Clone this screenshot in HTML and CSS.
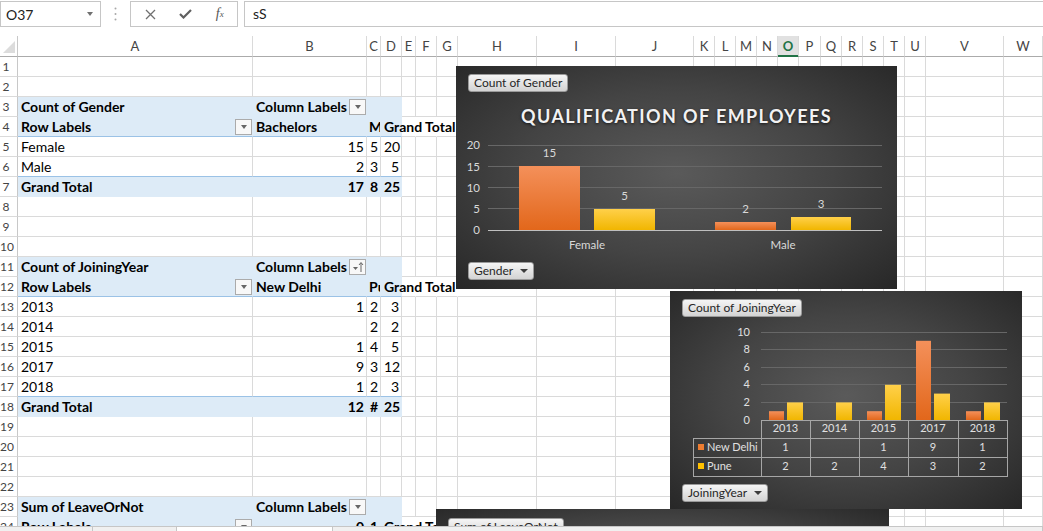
FILE: index.html
```html
<!DOCTYPE html>
<html>
<head>
<meta charset="utf-8">
<title>Pivot charts</title>
<link rel="stylesheet" href="styles.css">
</head>
<body>
<div class="fbar">
  <div class="namebox"><span>O37</span><span class="dd"></span></div>
  <div class="grip"><svg width="3" height="14" viewBox="0 0 3 14"><circle cx="1.5" cy="1.5" r="1"/><circle cx="1.5" cy="7" r="1"/><circle cx="1.5" cy="12.5" r="1"/></svg></div>
  <div class="fx-tools">
    <span class="tool"><svg width="11" height="11" viewBox="0 0 11 11"><path class="x" d="M1 1L10 10M10 1L1 10"/></svg></span>
    <span class="tool"><svg width="13" height="10" viewBox="0 0 13 10"><path class="ok" d="M1 5L4.5 8.5L12 1"/></svg></span>
    <span class="tool fx"><i>f</i><sub>x</sub></span>
  </div>
  <div class="finput">sS</div>
</div>

<div class="sheet-wrap">
  <div class="sheet">
    <div class="row hdr"><i class="corner"><svg width="17" height="20" viewBox="0 0 17 20"><polygon points="15,5 15,17 3,17"/></svg></i><i>A</i><i>B</i><i>C</i><i>D</i><i>E</i><i>F</i><i>G</i><i>H</i><i>I</i><i>J</i><i>K</i><i>L</i><i>M</i><i>N</i><i class="sel">O</i><i>P</i><i>Q</i><i>R</i><i>S</i><i>T</i><i>U</i><i>V</i><i>W</i></div>
    <div class="row"><i class="rh">1</i><i></i><i></i><i></i><i></i><i></i><i></i><i></i><i></i><i></i><i></i><i></i><i></i><i></i><i></i><i></i><i></i><i></i><i></i><i></i><i></i><i></i><i></i><i></i></div>
    <div class="row"><i class="rh">2</i><i></i><i></i><i></i><i></i><i></i><i></i><i></i><i></i><i></i><i></i><i></i><i></i><i></i><i></i><i></i><i></i><i></i><i></i><i></i><i></i><i></i><i></i><i></i></div>
    <div class="row"><i class="rh">3</i><i class="pv b">Count of Gender</i><i class="pv b flt">Column Labels<span class="btn"></span></i><i class="pv"></i><i class="pv"></i><i></i><i></i><i></i><i></i><i></i><i></i><i></i><i></i><i></i><i></i><i></i><i></i><i></i><i></i><i></i><i></i><i></i><i></i><i></i></div>
    <div class="row"><i class="rh">4</i><i class="pv ln b flt">Row Labels<span class="btn"></span></i><i class="pv ln b">Bachelors</i><i class="pv ln b tight">Masters</i><i class="pv ln b ov">Grand Total</i><i class="nb"></i><i class="nb"></i><i class="nb"></i><i></i><i></i><i></i><i></i><i></i><i></i><i></i><i></i><i></i><i></i><i></i><i></i><i></i><i></i><i></i><i></i></div>
    <div class="row"><i class="rh">5</i><i>Female</i><i class="n">15</i><i class="n">5</i><i class="n">20</i><i></i><i></i><i></i><i></i><i></i><i></i><i></i><i></i><i></i><i></i><i></i><i></i><i></i><i></i><i></i><i></i><i></i><i></i><i></i></div>
    <div class="row"><i class="rh">6</i><i class="ln">Male</i><i class="n ln">2</i><i class="n ln">3</i><i class="n ln">5</i><i></i><i></i><i></i><i></i><i></i><i></i><i></i><i></i><i></i><i></i><i></i><i></i><i></i><i></i><i></i><i></i><i></i><i></i><i></i></div>
    <div class="row"><i class="rh">7</i><i class="pv b">Grand Total</i><i class="pv b n">17</i><i class="pv b n">8</i><i class="pv b n">25</i><i></i><i></i><i></i><i></i><i></i><i></i><i></i><i></i><i></i><i></i><i></i><i></i><i></i><i></i><i></i><i></i><i></i><i></i><i></i></div>
    <div class="row"><i class="rh">8</i><i></i><i></i><i></i><i></i><i></i><i></i><i></i><i></i><i></i><i></i><i></i><i></i><i></i><i></i><i></i><i></i><i></i><i></i><i></i><i></i><i></i><i></i><i></i></div>
    <div class="row"><i class="rh">9</i><i></i><i></i><i></i><i></i><i></i><i></i><i></i><i></i><i></i><i></i><i></i><i></i><i></i><i></i><i></i><i></i><i></i><i></i><i></i><i></i><i></i><i></i><i></i></div>
    <div class="row"><i class="rh">10</i><i></i><i></i><i></i><i></i><i></i><i></i><i></i><i></i><i></i><i></i><i></i><i></i><i></i><i></i><i></i><i></i><i></i><i></i><i></i><i></i><i></i><i></i><i></i></div>
    <div class="row"><i class="rh">11</i><i class="pv b">Count of JoiningYear</i><i class="pv b flt">Column Labels<span class="btn sort"><svg width="13" height="12" viewBox="0 0 13 12"><polygon points="2,6 7,6 4.5,9"/><path d="M10 11V2M8 4L10 1.5L12 4"/></svg></span></i><i class="pv"></i><i class="pv"></i><i></i><i></i><i></i><i></i><i></i><i></i><i></i><i></i><i></i><i></i><i></i><i></i><i></i><i></i><i></i><i></i><i></i><i></i><i></i></div>
    <div class="row"><i class="rh">12</i><i class="pv ln b flt">Row Labels<span class="btn"></span></i><i class="pv ln b">New Delhi</i><i class="pv ln b tight">Pune</i><i class="pv ln b ov">Grand Total</i><i class="nb"></i><i class="nb"></i><i class="nb"></i><i></i><i></i><i></i><i></i><i></i><i></i><i></i><i></i><i></i><i></i><i></i><i></i><i></i><i></i><i></i><i></i></div>
    <div class="row"><i class="rh">13</i><i>2013</i><i class="n">1</i><i class="n">2</i><i class="n">3</i><i></i><i></i><i></i><i></i><i></i><i></i><i></i><i></i><i></i><i></i><i></i><i></i><i></i><i></i><i></i><i></i><i></i><i></i><i></i></div>
    <div class="row"><i class="rh">14</i><i>2014</i><i class="n"></i><i class="n">2</i><i class="n">2</i><i></i><i></i><i></i><i></i><i></i><i></i><i></i><i></i><i></i><i></i><i></i><i></i><i></i><i></i><i></i><i></i><i></i><i></i><i></i></div>
    <div class="row"><i class="rh">15</i><i>2015</i><i class="n">1</i><i class="n">4</i><i class="n">5</i><i></i><i></i><i></i><i></i><i></i><i></i><i></i><i></i><i></i><i></i><i></i><i></i><i></i><i></i><i></i><i></i><i></i><i></i><i></i></div>
    <div class="row"><i class="rh">16</i><i>2017</i><i class="n">9</i><i class="n">3</i><i class="n">12</i><i></i><i></i><i></i><i></i><i></i><i></i><i></i><i></i><i></i><i></i><i></i><i></i><i></i><i></i><i></i><i></i><i></i><i></i><i></i></div>
    <div class="row"><i class="rh">17</i><i class="ln">2018</i><i class="n ln">1</i><i class="n ln">2</i><i class="n ln">3</i><i></i><i></i><i></i><i></i><i></i><i></i><i></i><i></i><i></i><i></i><i></i><i></i><i></i><i></i><i></i><i></i><i></i><i></i><i></i></div>
    <div class="row"><i class="rh">18</i><i class="pv b">Grand Total</i><i class="pv b n">12</i><i class="pv b n">#</i><i class="pv b n">25</i><i></i><i></i><i></i><i></i><i></i><i></i><i></i><i></i><i></i><i></i><i></i><i></i><i></i><i></i><i></i><i></i><i></i><i></i><i></i></div>
    <div class="row"><i class="rh">19</i><i></i><i></i><i></i><i></i><i></i><i></i><i></i><i></i><i></i><i></i><i></i><i></i><i></i><i></i><i></i><i></i><i></i><i></i><i></i><i></i><i></i><i></i><i></i></div>
    <div class="row"><i class="rh">20</i><i></i><i></i><i></i><i></i><i></i><i></i><i></i><i></i><i></i><i></i><i></i><i></i><i></i><i></i><i></i><i></i><i></i><i></i><i></i><i></i><i></i><i></i><i></i></div>
    <div class="row"><i class="rh">21</i><i></i><i></i><i></i><i></i><i></i><i></i><i></i><i></i><i></i><i></i><i></i><i></i><i></i><i></i><i></i><i></i><i></i><i></i><i></i><i></i><i></i><i></i><i></i></div>
    <div class="row"><i class="rh">22</i><i></i><i></i><i></i><i></i><i></i><i></i><i></i><i></i><i></i><i></i><i></i><i></i><i></i><i></i><i></i><i></i><i></i><i></i><i></i><i></i><i></i><i></i><i></i></div>
    <div class="row"><i class="rh">23</i><i class="pv b">Sum of LeaveOrNot</i><i class="pv b flt">Column Labels<span class="btn"></span></i><i class="pv"></i><i class="pv"></i><i></i><i></i><i></i><i></i><i></i><i></i><i></i><i></i><i></i><i></i><i></i><i></i><i></i><i></i><i></i><i></i><i></i><i></i><i></i></div>
    <div class="row"><i class="rh">24</i><i class="pv ln b flt">Row Labels<span class="btn"></span></i><i class="pv ln b n">0</i><i class="pv ln b n">1</i><i class="pv ln b ov">Grand Total</i><i class="nb"></i><i class="nb"></i><i class="nb"></i><i></i><i></i><i></i><i></i><i></i><i></i><i></i><i></i><i></i><i></i><i></i><i></i><i></i><i></i><i></i><i></i></div>
  </div>

  <div class="chart c1">
    <svg class="plot" width="441" height="223" viewBox="0 0 441 223">
      <defs>
        <linearGradient id="og1" x1="0" y1="0" x2="0" y2="1"><stop offset="0" stop-color="#f4905a"/><stop offset="1" stop-color="#e2671b"/></linearGradient>
        <linearGradient id="yg1" x1="0" y1="0" x2="0" y2="1"><stop offset="0" stop-color="#ffd04a"/><stop offset="1" stop-color="#f1b600"/></linearGradient>
      </defs>
      <path class="grid" d="M32 79.5H426M32 100.5H426M32 121.5H426M32 142.5H426"/>
      <rect x="63" y="100" width="61" height="64" fill="url(#og1)"/>
      <rect x="138" y="143" width="61" height="21" fill="url(#yg1)"/>
      <rect x="259" y="156" width="61" height="8" fill="url(#og1)"/>
      <rect x="335" y="151" width="60" height="13" fill="url(#yg1)"/>
      <path class="axis" d="M32 164.5H426"/>
      <g class="ylab">
        <text x="24" y="83">20</text>
        <text x="24" y="105">15</text>
        <text x="24" y="126">10</text>
        <text x="24" y="147">5</text>
        <text x="24" y="168">0</text>
      </g>
      <g class="mid">
        <text x="93.5" y="91">15</text>
        <text x="168.5" y="134">5</text>
        <text x="289.5" y="147">2</text>
        <text x="365" y="142">3</text>
        <text x="131" y="183">Female</text>
        <text x="327" y="183">Male</text>
      </g>
    </svg>
    <div class="overlay o1">
      <span class="fbtn">Count of Gender</span>
      <div class="title">QUALIFICATION OF EMPLOYEES</div>
      <span class="fbtn bottom">Gender<span class="tri"></span></span>
    </div>
  </div>

  <div class="chart c2">
    <svg class="plot p2" width="352" height="218" viewBox="0 0 352 218">
      <defs>
        <linearGradient id="og2" x1="0" y1="0" x2="0" y2="1"><stop offset="0" stop-color="#f4905a"/><stop offset="1" stop-color="#e2671b"/></linearGradient>
        <linearGradient id="yg2" x1="0" y1="0" x2="0" y2="1"><stop offset="0" stop-color="#ffd04a"/><stop offset="1" stop-color="#f1b600"/></linearGradient>
      </defs>
      <path class="grid" d="M91 41.5H337M91 58.5H337M91 76.5H337M91 93.5H337M91 111.5H337"/>
      <rect x="99" y="120.2" width="15" height="8.8" fill="url(#og2)"/>
      <rect x="117" y="111.4" width="16" height="17.6" fill="url(#yg2)"/>
      <rect x="166" y="111.4" width="16" height="17.6" fill="url(#yg2)"/>
      <rect x="197" y="120.2" width="15" height="8.8" fill="url(#og2)"/>
      <rect x="215" y="93.8" width="16" height="35.2" fill="url(#yg2)"/>
      <rect x="246" y="49.8" width="15" height="79.2" fill="url(#og2)"/>
      <rect x="264" y="102.6" width="16" height="26.4" fill="url(#yg2)"/>
      <rect x="296" y="120.2" width="15" height="8.8" fill="url(#og2)"/>
      <rect x="314" y="111.4" width="16" height="17.6" fill="url(#yg2)"/>
      <path class="tbl" d="M91 129.5H337M23 147.5H337M23 166.5H337M23 185.5H337M23.5 147V186M91.5 129V186M140.5 129V186M189.5 129V186M238.5 129V186M288.5 129V186M337.5 129V186"/>
      <g class="ylab">
        <text x="80" y="45">10</text>
        <text x="80" y="62">8</text>
        <text x="80" y="80">6</text>
        <text x="80" y="97">4</text>
        <text x="80" y="115">2</text>
        <text x="80" y="132.5">0</text>
      </g>
      <g class="mid">
        <text x="115.5" y="141">2013</text>
        <text x="164.5" y="141">2014</text>
        <text x="213.5" y="141">2015</text>
        <text x="263" y="141">2017</text>
        <text x="312.5" y="141">2018</text>
        <text x="115.5" y="160">1</text>
        <text x="213.5" y="160">1</text>
        <text x="263" y="160">9</text>
        <text x="312.5" y="160">1</text>
        <text x="115.5" y="179">2</text>
        <text x="164.5" y="179">2</text>
        <text x="213.5" y="179">4</text>
        <text x="263" y="179">3</text>
        <text x="312.5" y="179">2</text>
      </g>
      <rect x="28" y="153" width="6" height="6" fill="#ed7d31"/>
      <rect x="28" y="172" width="6" height="6" fill="#ffc000"/>
      <text x="37" y="160">New Delhi</text>
      <text x="37" y="179">Pune</text>
    </svg>
    <div class="overlay o2">
      <span class="fbtn">Count of JoiningYear</span>
      <span class="fbtn bottom">JoiningYear<span class="tri"></span></span>
    </div>
  </div>

  <div class="chart c3">
    <div class="overlay o3">
      <span class="fbtn">Sum of LeaveOrNot</span>
    </div>
  </div>
</div>

<div class="tabs"><span class="t1"></span><span class="t2"></span><span class="t3"></span><span class="t4"></span></div>
</body>
</html>
```

FILE: styles.css
```css
* { box-sizing: border-box; }
html, body { margin: 0; padding: 0; }
body {
  width: 1043px;
  height: 531px;
  overflow: hidden;
  background: #fff;
  font-family: Lato, "Liberation Sans", sans-serif;
  color: #000;
  display: flex;
  flex-direction: column;
}

/* formula bar */
.fbar {
  height: 36px;
  flex: none;
  display: flex;
  align-items: flex-start;
  padding-top: 1px;
}
.namebox {
  width: 101px;
  height: 26px;
  border: 1px solid #c6c6c6;
  display: flex;
  align-items: center;
  justify-content: space-between;
  padding: 0 7px 0 5px;
  font-size: 14px;
  color: #222;
}
.namebox .dd {
  width: 0;
  height: 0;
  border-left: 3.5px solid transparent;
  border-right: 3.5px solid transparent;
  border-top: 4px solid #707070;
}
.grip {
  width: 29px;
  height: 26px;
  display: flex;
  align-items: center;
  justify-content: center;
}
.grip svg { fill: #a8a8a8; display: block; }
.fx-tools {
  width: 108px;
  height: 26px;
  border: 1px solid #c6c6c6;
  display: flex;
  align-items: center;
  padding-left: 2px;
}
.tool {
  width: 35px;
  display: flex;
  justify-content: center;
  align-items: center;
}
.tool svg { display: block; }
.tool .x { fill: none; stroke: #707070; stroke-width: 1.3; }
.tool .ok { fill: none; stroke: #606060; stroke-width: 2.2; }
.fx {
  font-family: "Liberation Serif", serif;
  font-style: italic;
  font-size: 14px;
  color: #555;
}
.fx sub { font-size: 9px; }
.finput {
  flex: 1;
  height: 26px;
  margin-left: 6px;
  margin-right: -2px;
  border: 1px solid #c6c6c6;
  padding-left: 8px;
  font-size: 14px;
  line-height: 24px;
  color: #222;
}

/* sheet */
.sheet-wrap {
  position: relative;
  height: 490px;
  flex: none;
  overflow: hidden;
}
.sheet {
  --cols: 18px 235px 114px 14px 21px 14px 21px 21px 79px 79px 78px 21px 21px 21px 21px 21px 22px 21px 21px 21px 21px 21px 78px 39px;
  width: 1043px;
  font-size: 14px;
}
.row {
  display: grid;
  grid-template-columns: var(--cols);
  height: 20px;
}
.row > * {
  display: block;
  min-width: 0;
  font-style: normal;
  border-right: 1px solid #dadada;
  border-bottom: 1px solid #dadada;
  overflow: hidden;
  white-space: nowrap;
  padding: 0 2px 0 3px;
  line-height: 19px;
}
.hdr { height: 21px; }
.hdr > * {
  border-bottom-color: #ababab;
  text-align: center;
  font-size: 13px;
  line-height: 20px;
  color: #444;
  padding: 0;
}
.hdr > .corner { border-right-color: #c8c8c8; }
.corner svg { display: block; fill: #dcdcdc; }
.hdr > .sel {
  background: #e1e1e1;
  color: #217346;
  font-weight: 700;
  border-bottom-color: #217346;
  box-shadow: inset 0 -1px 0 #217346;
}
.row > .rh {
  font-size: 12px;
  color: #444;
  text-align: center;
  padding: 0 5px 0 0;
  border-right-color: #c8c8c8;
}
.row > .pv {
  background: #ddebf7;
  border-right-color: #ddebf7;
  border-bottom-color: #ddebf7;
}
.row > .ln { border-bottom-color: #9bc2e6; }
.row > .b { font-weight: 700; }
.row > .n { text-align: right; }
.row > .ov { overflow: visible; }
.row > .tight { padding-left: 2px; }
.row > .nb { border-right-color: transparent; }
.row > .flt {
  display: flex;
  align-items: center;
  justify-content: space-between;
  padding-right: 0;
}
.btn {
  flex: none;
  width: 17px;
  height: 16px;
  border: 1px solid #ababab;
  background: #f8f8f8;
  display: flex;
  align-items: center;
  justify-content: center;
}
.btn::after {
  content: "";
  border-left: 3px solid transparent;
  border-right: 3px solid transparent;
  border-top: 4px solid #666;
}
.btn.sort::after { content: none; }
.btn.sort svg { display: block; fill: #666; }
.btn.sort path { fill: none; stroke: #666; stroke-width: 1; }

/* charts */
.chart {
  position: absolute;
  display: grid;
  background: radial-gradient(ellipse at 50% 48%, #5a5a5a 0%, #444 50%, #272727 100%);
  overflow: hidden;
}
.chart > * { grid-area: 1 / 1; }
.c1 { left: 456px; top: 30px; width: 441px; height: 223px; }
.c2 { left: 670px; top: 255px; width: 352px; height: 218px; }
.c3 { left: 436px; top: 473px; width: 453px; height: 110px; }
.plot { display: block; }
.plot text {
  fill: #d9d9d9;
  font-family: Lato, "Liberation Sans", sans-serif;
  font-size: 11.5px;
}
.p2 text { font-size: 11px; fill: #e0e0e0; }
.plot .ylab text { text-anchor: end; }
.plot .mid text { text-anchor: middle; }
.plot .grid { stroke: #676767; stroke-width: 1; fill: none; }
.plot .axis { stroke: #bfbfbf; stroke-width: 1; fill: none; }
.plot .tbl { stroke: #a6a6a6; stroke-width: 1; fill: none; }

.overlay {
  display: flex;
  flex-direction: column;
  align-items: flex-start;
  min-height: 0;
}
.o1 { padding: 8px 12px 9px; }
.o2 { padding: 8px 12px 7px; }
.o3 { padding: 9px 12px; }
.fbtn {
  height: 18px;
  padding: 0 5px;
  border: 1px solid #9a9a9a;
  border-radius: 3px;
  background: linear-gradient(#f5f5f5, #d3d3d3);
  color: #262626;
  font-size: 12px;
  line-height: 16px;
  display: flex;
  align-items: center;
  gap: 7px;
  white-space: nowrap;
}
.fbtn .tri {
  border-left: 4px solid transparent;
  border-right: 4px solid transparent;
  border-top: 4px solid #3c3c3c;
}
.fbtn.bottom { margin-top: auto; }
.title {
  align-self: stretch;
  text-align: center;
  margin-top: 13px;
  font-size: 18px;
  line-height: 22px;
  font-weight: 700;
  letter-spacing: 1.4px;
  color: #f2f2f2;
  text-shadow: 0 1px 3px rgba(0, 0, 0, 0.7);
}

/* sheet tabs strip */
.tabs {
  flex: none;
  height: 5px;
  display: flex;
  border-top: 1px solid #c6c6c6;
  background: #f0f0f0;
}
.tabs span { border-right: 1px solid #c6c6c6; }
.t1 { width: 93px; }
.t2 { width: 84px; }
.t3 { width: 156px; background: #fff; }
.t4 { flex: 1; border-right: 0; }
```
